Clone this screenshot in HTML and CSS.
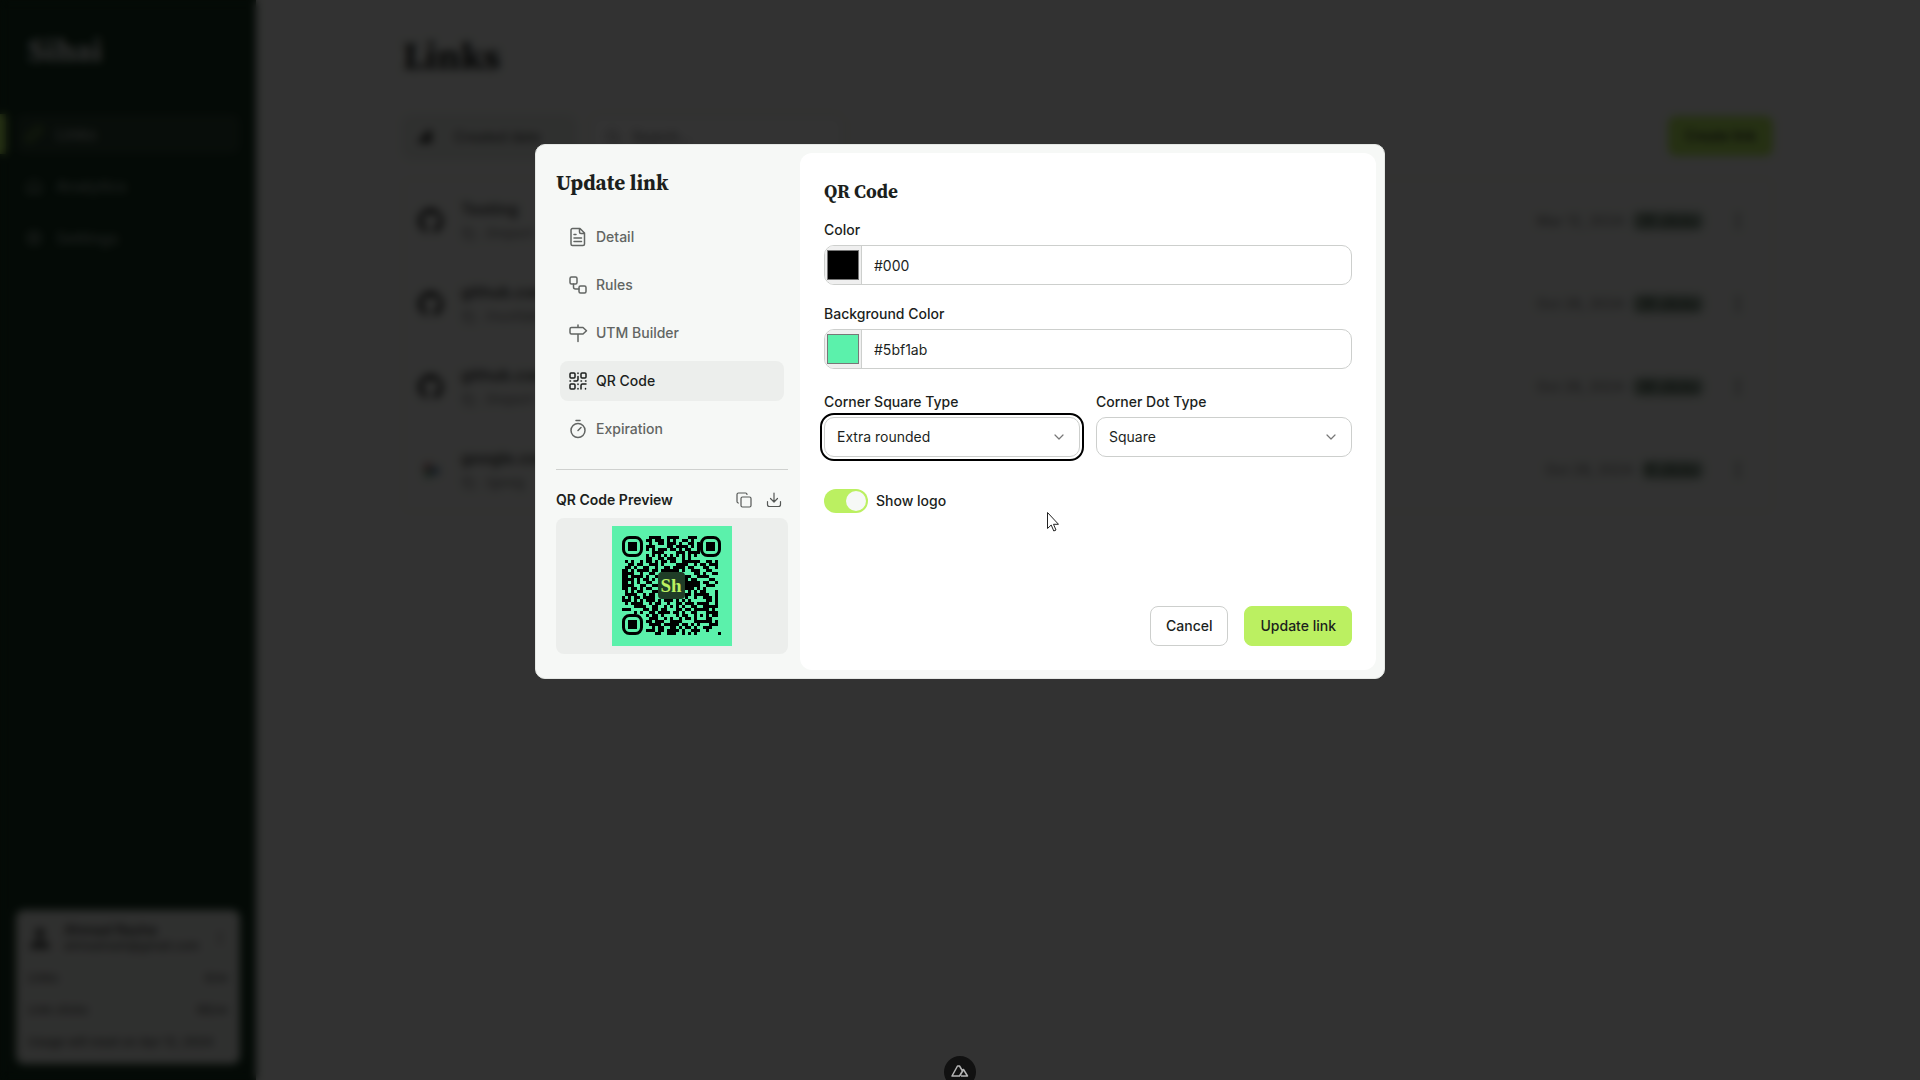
FILE: index.html
```html
<!DOCTYPE html>
<html lang="en">
<head>
<meta charset="utf-8">
<title>Sihai - Links</title>
<meta name="viewport" content="width=device-width, initial-scale=1">
<link rel="stylesheet" href="styles.css">
</head>
<body>
<svg class="sprite" aria-hidden="true">
  <symbol id="dots" viewBox="0 0 24 24"><circle cx="12" cy="5" r="2"/><circle cx="12" cy="12" r="2"/><circle cx="12" cy="19" r="2"/></symbol>
  <symbol id="github" viewBox="0 0 16 16"><path d="M8 0a8 8 0 0 0-2.5 15.600c.4.1.5-.2.5-.4v-1.500c-2.200.5-2.700-1-2.700-1-.4-.9-.9-1.200-.9-1.200-.7-.5.1-.5.1-.5.8.1 1.200.8 1.200.8.700 1.300 1.900.9 2.300.7.1-.5.3-.9.5-1.100-1.800-.2-3.600-.9-3.600-4 0-.9.3-1.600.8-2.100-.1-.2-.4-1 .1-2.100 0 0 .700-.2 2.200.8a7.600 7.600 0 0 1 4 0c1.500-1 2.200-.8 2.200-.8.4 1.100.2 1.900.1 2.100.5.6.8 1.300.8 2.100 0 3.100-1.900 3.700-3.700 3.900.3.3.6.8.6 1.500v2.200c0 .2.1.5.5.4A8 8 0 0 0 8 0z"/></symbol>
  <symbol id="copy" viewBox="0 0 24 24"><path d="M8 8h12v12H8zM4 16V4h12" fill="none" stroke="currentColor" stroke-width="2"/></symbol>
</svg>

<div class="app">
  <aside class="sidebar">
    <p class="brand">Sihai</p>
    <nav class="menu">
      <a class="menu-link menu-link-active" href="#"><svg viewBox="0 0 24 24"><path d="M10 14a4 4 0 0 0 6 0l4-4a4 4 0 0 0-6-6l-1 1M14 10a4 4 0 0 0-6 0l-4 4a4 4 0 0 0 6 6l1-1"/></svg>Links</a>
      <a class="menu-link" href="#"><svg viewBox="0 0 24 24"><path d="M4 20V10l8-5 8 5v10zM8 16h8"/></svg>Analytics</a>
      <a class="menu-link" href="#"><svg viewBox="0 0 24 24"><circle cx="12" cy="12" r="8"/><circle cx="12" cy="12" r="3"/></svg>Settings</a>
    </nav>
    <section class="account">
      <div class="account-user">
        <svg viewBox="0 0 24 24"><circle cx="12" cy="7" r="5"/><path d="M2 23c0-12 20-12 20 0z"/></svg>
        <div class="account-name"><strong>Ahmad Rasha</strong><span>ahmadrash@gmail.com</span></div>
        <svg class="account-more" viewBox="0 0 24 24"><use href="#dots"/></svg>
      </div>
      <div class="usage"><span>Links</span><span>4/∞</span></div>
      <div class="usage"><span>Link clicks</span><span>66/∞</span></div>
      <p class="reset">Usage will reset on Apr 12, 2024</p>
    </section>
  </aside>
  <main class="main">
    <div class="content">
      <h1 class="page-title">Links</h1>
      <div class="toolbar">
        <button class="sort" type="button"><svg viewBox="0 0 24 24"><path d="M3 20h18V3h-7v6H8v6H3z"/></svg>Created date</button>
        <label class="search"><svg viewBox="0 0 24 24"><circle cx="11" cy="11" r="7"/><path d="m16 16 5 5"/></svg><input type="text" placeholder="Search..." aria-label="Search"></label>
        <button class="create" type="button">Create link</button>
      </div>
      <ul class="links">
        <li class="link-row"><svg class="favicon"><use href="#github"/></svg><div class="link-text"><strong>Testing</strong><span><svg><use href="#copy"/></svg>/import</span></div><time>Mar 12, 2024</time><span class="clicks">26 clicks</span><svg class="more"><use href="#dots"/></svg></li>
        <li class="link-row"><svg class="favicon"><use href="#github"/></svg><div class="link-text"><strong>github.com</strong><span><svg><use href="#copy"/></svg>/nuxtlabs</span></div><time>Oct 26, 2024</time><span class="clicks">26 clicks</span><svg class="more"><use href="#dots"/></svg></li>
        <li class="link-row"><svg class="favicon"><use href="#github"/></svg><div class="link-text"><strong>github.com</strong><span><svg><use href="#copy"/></svg>/import</span></div><time>Oct 26, 2024</time><span class="clicks">38 clicks</span><svg class="more"><use href="#dots"/></svg></li>
        <li class="link-row"><svg class="favicon" viewBox="0 0 16 16"><path fill="#b77" d="M3 8a5 5 0 0 1 5-5v5z"/><path fill="#68a" d="M8 6h5v5H8z"/><path fill="#7a8" d="M3 8h5v5H5z"/></svg><div class="link-text"><strong>google.com</strong><span><svg><use href="#copy"/></svg>/goog</span></div><time>Oct 26, 2024</time><span class="clicks">6 clicks</span><svg class="more"><use href="#dots"/></svg></li>
      </ul>
    </div>
  </main>
</div>

<div class="overlay">
  <div class="modal" role="dialog" aria-modal="true" aria-labelledby="modal-title">
    <aside class="modal-side">
      <h2 class="modal-title" id="modal-title">Update link</h2>
      <nav class="tabs">
        <button class="tab" type="button"><svg class="icon" viewBox="0 0 20 20"><path d="M4.500 1.500h7.500l4.500 4.500v11a1.500 1.500 0 0 1-1.500 1.500H4.500A1.500 1.500 0 0 1 3 17V3a1.500 1.500 0 0 1 1.500-1.500zM11.500 2v3a1.500 1.500 0 0 0 1.500 1.500h3M6 7.500h2M6 11h7.500M6 14.500h7.500"/></svg>Detail</button>
        <button class="tab" type="button"><svg class="icon" viewBox="0 0 20 20"><rect x="2" y="2" width="7" height="7" rx="1.500"/><rect x="11" y="11" width="7" height="7" rx="1.500"/><path d="M5.500 9v3a2 2 0 0 0 2 2H11"/></svg>Rules</button>
        <button class="tab" type="button"><svg class="icon" viewBox="0 0 20 20"><path d="M10 2v2.500M10 11v7.500M3.500 4.500h11.500l3.500 3.200-3.500 3.300H3.500A1.500 1.500 0 0 1 2 9.500V6a1.500 1.500 0 0 1 1.500-1.500z"/></svg>UTM Builder</button>
        <button class="tab tab-active" type="button"><svg class="icon" viewBox="0 0 20 20"><rect x="2" y="2" width="5" height="5" rx="1"/><rect x="13" y="2" width="5" height="5" rx="1"/><rect x="2" y="13" width="5" height="5" rx="1"/><path d="M10 2v.5M10 5.500v3a1.500 1.500 0 0 1-1.500 1.500H6M2 10h.5M10 13v.5M10 17.500v.5M13 10h.5M17.500 10h.5M13 18v-3.500a1.500 1.500 0 0 1 1.500-1.500H18M17.500 17.500v.5"/></svg>QR Code</button>
        <button class="tab" type="button"><svg class="icon" viewBox="0 0 20 20"><circle cx="10" cy="11.500" r="7"/><path d="M8 1.500h4M10 11.500l3-3"/></svg>Expiration</button>
      </nav>
      <section class="preview">
        <div class="preview-head">
          <h3 class="preview-title">QR Code Preview</h3>
          <button class="icon-button" type="button" aria-label="Copy"><svg class="icon-small" viewBox="0 0 16 16"><rect x="5" y="5" width="10" height="10" rx="1.500"/><path d="M2.500 11A1.500 1.500 0 0 1 1 9.500v-7A1.500 1.500 0 0 1 2.500 1h7A1.500 1.500 0 0 1 11 2.500"/></svg></button>
          <button class="icon-button" type="button" aria-label="Download"><svg class="icon-small" viewBox="0 0 16 16"><path d="M8 1v9M4.500 6.500 8 10l3.500-3.500M1.500 9.500v3a2 2 0 0 0 2 2h9a2 2 0 0 0 2-2v-3"/></svg></button>
        </div>
        <div class="preview-box">
          <svg class="qr" viewBox="0 0 120 120" role="img" aria-label="QR code">
            <rect width="120" height="120" fill="#5bf1ab"/>
            <g transform="translate(10 10)">
              <path id="qr-modules" shape-rendering="crispEdges"/>
              <g fill="none" stroke="#000" stroke-width="3"><rect x="1.500" y="1.500" width="18" height="18" rx="6"/><rect x="79.500" y="1.500" width="18" height="18" rx="6"/><rect x="1.500" y="79.500" width="18" height="18" rx="6"/></g>
              <path d="M6 6h9v9H6zM84 6h9v9h-9zM6 84h9v9H6z"/>
            </g>
            <rect x="46" y="46" width="27" height="27" rx="4" fill="#1f3d27"/>
            <text class="qr-logo" x="59" y="66">Sh</text>
          </svg>
        </div>
      </section>
    </aside>

    <form class="panel">
      <h3 class="panel-title">QR Code</h3>
      <div class="field">
        <label for="color">Color</label>
        <div class="color-input">
          <input class="swatch" type="color" value="#000000" aria-label="Pick color">
          <input class="color-text" id="color" type="text" value="#000">
        </div>
      </div>
      <div class="field">
        <label for="background">Background Color</label>
        <div class="color-input">
          <input class="swatch" type="color" value="#5bf1ab" aria-label="Pick background color">
          <input class="color-text" id="background" type="text" value="#5bf1ab">
        </div>
      </div>
      <div class="field-row">
        <div class="field">
          <label for="corner-square">Corner Square Type</label>
          <div class="select select-focused">
            <select id="corner-square"><option>Extra rounded</option><option>Square</option><option>Dot</option></select>
            <svg class="icon-small chevron" viewBox="0 0 16 16"><path d="m4 6 4 4 4-4"/></svg>
          </div>
        </div>
        <div class="field">
          <label for="corner-dot">Corner Dot Type</label>
          <div class="select">
            <select id="corner-dot"><option>Square</option><option>Dot</option></select>
            <svg class="icon-small chevron" viewBox="0 0 16 16"><path d="m4 6 4 4 4-4"/></svg>
          </div>
        </div>
      </div>
      <div class="toggle-row">
        <input class="toggle" id="show-logo" type="checkbox" checked>
        <label for="show-logo">Show logo</label>
      </div>
      <div class="actions">
        <button class="button" type="button">Cancel</button>
        <button class="button button-primary" type="submit">Update link</button>
      </div>
    </form>
  </div>
</div>

<button class="devtools" type="button" aria-label="Nuxt DevTools"><svg viewBox="0 0 18 12"><path d="M10 11h6.500L12.500 4.500 9 10.500M1 11h7.500l3-5L8.500 1 6.500 1z" /></svg></button>
<svg class="cursor" viewBox="0 0 12 20"><path d="M.5.500v16l3.700-3.500 2.600 6 2.200-1-2.500-5.700h5z"/></svg>
<script src="qr.js"></script>
</body>
</html>
```
FILE: styles.css
```css
* { box-sizing: border-box; margin: 0; }
body {
  height: 100vh;
  overflow: hidden;
  background: #f8faf7;
  color: #1c1f1d;
  font: 500 14px/20px Inter, "Liberation Sans", sans-serif;
}
button, input, select { font: inherit; color: inherit; }
h1, h2, h3, .brand { font-family: "Source Serif 4", "Source Serif Pro", "Liberation Serif", serif; font-weight: 700; }
.sprite { position: absolute; width: 0; height: 0; }

/* page behind the dialog */
.app { display: flex; height: 100vh; }
.sidebar {
  display: flex;
  flex-direction: column;
  flex: none;
  width: 256px;
  padding: 28px 16px 16px;
  background: #14321e;
  color: #9aa89e;
}
.brand { padding-left: 12px; font-size: 32px; line-height: 44px; color: #f5f5f5; }
.menu { display: grid; gap: 12px; margin-top: 42px; }
.menu-link {
  display: flex;
  align-items: center;
  gap: 12px;
  height: 40px;
  padding-left: 8px;
  border-radius: 8px;
  color: inherit;
  font-size: 16px;
  text-decoration: none;
}
.menu-link svg { width: 20px; height: 20px; fill: none; stroke: currentColor; stroke-width: 2; }
.menu-link-active { position: relative; background: #2a4232; color: #b5beb7; }
.menu-link-active svg { stroke: #8fbf4a; }
.menu-link-active::before { content: ""; position: absolute; left: -16px; width: 6px; height: 40px; background: #bbf061; }
.account { margin-top: auto; padding: 12px; border-radius: 8px; background: #ecefeb; color: #555; font-size: 12px; }
.account-user { display: flex; align-items: center; gap: 12px; margin-bottom: 14px; }
.account-user svg { width: 24px; height: 24px; fill: #555; }
.account-name { display: grid; flex: 1; line-height: 16px; }
.account-name strong { color: #444; font-size: 14px; font-weight: 600; }
.account-user .account-more { width: 16px; }
.usage { display: flex; justify-content: space-between; padding-bottom: 12px; }
.main { flex: 1; padding: 32px 147px; }
.page-title { font-size: 38px; line-height: 48px; }
.toolbar { display: flex; gap: 16px; height: 42px; margin-top: 36px; }
.sort, .search { border: 1px solid #d0d3d0; border-radius: 8px; }
.sort { display: flex; align-items: center; gap: 20px; width: 172px; padding: 0 12px; background: #ecefeb; color: #555; }
.sort svg { width: 18px; height: 18px; fill: #333; }
.search { display: flex; align-items: center; gap: 8px; width: 252px; padding: 0 12px; background: #fff; }
.search svg { width: 18px; height: 18px; fill: none; stroke: #777; stroke-width: 2; }
.search input { flex: 1; min-width: 0; border: 0; background: none; }
.create { width: 105px; height: 40px; margin-left: auto; padding: 0 12px; border: 0; border-radius: 8px; background: #bbf061; }
.links { margin-top: 20px; padding: 0; border: 1px solid #eee; border-radius: 8px; list-style: none; }
.link-row { display: flex; align-items: center; height: 83px; padding: 0 24px 0 14px; color: #888; }
.favicon { width: 26px; height: 26px; margin-right: 17px; fill: #222; }
.link-text { display: grid; gap: 4px; flex: 1; }
.link-text strong { color: #444; font-size: 16px; font-weight: 600; }
.link-text svg { width: 16px; height: 16px; margin-right: 8px; vertical-align: middle; }
.clicks { margin-left: 8px; padding: 0 6px; border-radius: 8px; background: #aebdb1; color: #1f3d27; }
.more { width: 20px; height: 20px; margin-left: 24px; fill: #555; }

/* dialog */
.overlay {
  position: fixed;
  inset: 0;
  display: flex;
  align-items: flex-start;
  justify-content: center;
  padding: 144px 16px 16px;
  background: rgba(0, 0, 0, .8);
  backdrop-filter: blur(4px);
}
.modal {
  display: flex;
  width: 100%;
  max-width: 850px;
  padding: 8px;
  border: 1px solid #e4e7e4;
  border-radius: 10px;
  background: #f6f8f6;
}
.modal-side { flex: none; width: 256px; padding: 16px 12px; }
.modal-title { font-size: 21px; line-height: 28px; }
.tabs { display: grid; gap: 8px; margin: 20px 4px; }
.tab {
  display: flex;
  align-items: center;
  gap: 8px;
  height: 40px;
  padding: 0 8px;
  border: 0;
  border-radius: 8px;
  background: none;
  color: #626563;
  text-align: left;
}
.tab-active { background: #eceeec; color: #1c1f1d; }
.icon, .icon-small { flex: none; fill: none; stroke: currentColor; stroke-width: 1.5; stroke-linecap: round; stroke-linejoin: round; }
.icon { width: 20px; height: 20px; }
.icon-small { width: 16px; height: 16px; stroke-width: 1.2; }
.preview { padding-top: 16px; border-top: 1px solid #cfd1cf; }
.preview-head { display: flex; align-items: center; gap: 2px; height: 28px; margin-bottom: 4px; }
.preview-title { flex: 1; font: inherit; font-weight: 600; }
.icon-button { display: grid; place-items: center; width: 28px; height: 28px; padding: 0; border: 0; background: none; color: #555856; }
.preview-box { display: flex; justify-content: center; padding: 8px; border-radius: 8px; background: #eceeec; }
.qr { width: 120px; height: 120px; }
.qr-logo { fill: #bbf061; font: 700 19px "Liberation Serif", serif; text-anchor: middle; }

.panel {
  display: flex;
  flex: 1;
  flex-direction: column;
  min-width: 0;
  padding: 24px;
  border-radius: 12px;
  background: #fff;
}
.panel-title { margin-bottom: 15px; font-size: 19px; line-height: 28px; }
.field { display: grid; gap: 5px; margin-bottom: 19px; }
.color-input { display: flex; height: 40px; overflow: hidden; border: 1px solid #cdcfcd; border-radius: 10px; }
.swatch { width: 37px; height: 38px; padding: 0; border: 0; border-right: 1px solid #cdcfcd; background: #efefef; }
.color-text { flex: 1; min-width: 0; padding: 1px 12px 0; border: 0; background: none; font-weight: 400; outline: 0; }
.field-row { display: grid; grid-template-columns: 1fr 1fr; gap: 16px; margin: 4px 0 13px; }
.select { display: grid; align-items: center; height: 40px; border: 1px solid #cdcfcd; border-radius: 10px; }
.select select { grid-area: 1 / 1; height: 38px; padding: 0 12px; border: 0; outline: 0; background: none; font-weight: 400; appearance: none; }
.select-focused { outline: 2px solid #000; outline-offset: 2px; }
.chevron { grid-area: 1 / 1; justify-self: end; margin-right: 12px; color: #777; pointer-events: none; }
.toggle-row { display: flex; align-items: center; gap: 8px; }
.toggle {
  display: flex;
  justify-content: flex-end;
  width: 44px;
  height: 24px;
  margin: 0;
  padding: 2px;
  border-radius: 12px;
  background: #bbf061;
  appearance: none;
}
.toggle::before { content: ""; width: 20px; height: 20px; border-radius: 10px; background: #f6f8f6; }
.actions { display: flex; justify-content: flex-end; gap: 16px; margin-top: auto; }
.button { height: 40px; padding: 0 15px; border: 1px solid #cdcfcd; border-radius: 8px; background: #fff; }
.button-primary { border-color: #bbf061; background: #bbf061; }

/* floating extras */
.devtools {
  position: fixed;
  left: calc(50% - 16px);
  bottom: -8px;
  width: 32px;
  height: 32px;
  padding: 0;
  border: 0;
  border-radius: 16px;
  background: #111;
}
.devtools svg { width: 18px; height: 12px; fill: none; stroke: #b5b5b5; stroke-width: 1.5; stroke-linejoin: round; }
.cursor { position: fixed; left: 1047px; top: 512px; width: 12px; height: 20px; fill: #fff; stroke: #222; }
```
FILE: qr.js
```js
// Data modules of the code; the three corner squares are drawn in the markup.
const rows = [
  ".........####..####...###........",
  "........##.###.#.#..##.#.........",
  ".........#..##.###.#..##.#.......",
  "........###....##.####.#.#.......",
  "........#.#.###.##.#.##..#.......",
  "..........####....###.####.......",
  "........#.#.#.#.#.#.#.#.#........",
  "........##..##.###..#.#..........",
  ".#.#..#.##.#.##.##..######..##.#.",
  "..##.##..###.#....####..#.##.###.",
  ".##.#..##..#..##.####.##...##..#.",
  "##.#.####.##.######.#..###..##...",
  "####..#..##.............##.#..##.",
  "##.####.#..#.........##..####....",
  "####.#.##.#..........#.##....##..",
  "##.#.#..##...........#####.##..#.",
  "####..##..##.........#####..###..",
  "##.##.#.##...........###.#.#.....",
  ".#.#.##...##..........#.#.##...#.",
  ".####..#.##..........##.#####..#.",
  "#.#.##.####..........#..#..###.#.",
  "###.#.#.###.#.###.#.#.#.....##.#.",
  ".#.####..#.##..#..##.###.####..#.",
  "....####..##..#.#.#.#..##..#####.",
  "###....##.##.##...##.##.#####.#..",
  "....#.#..##.####.##.#..##...####.",
  "........#.##.#....#.##..#.#.#.##.",
  ".........###..#.#..#.##.#...##...",
  "........##.###..####....######.#.",
  ".........####.#####.##.#.#...###.",
  "..........#.##..##.#.##.#..###...",
  "........###.##.####.#..###..#....",
  "...........##..###..#.#.#.......#"
];

const path = rows
  .map((row, y) => [...row].map((cell, x) => cell === "#" ? `M${x * 3} ${y * 3}h3v3h-3z` : "").join(""))
  .join("");
document.getElementById("qr-modules").setAttribute("d", path);
```
